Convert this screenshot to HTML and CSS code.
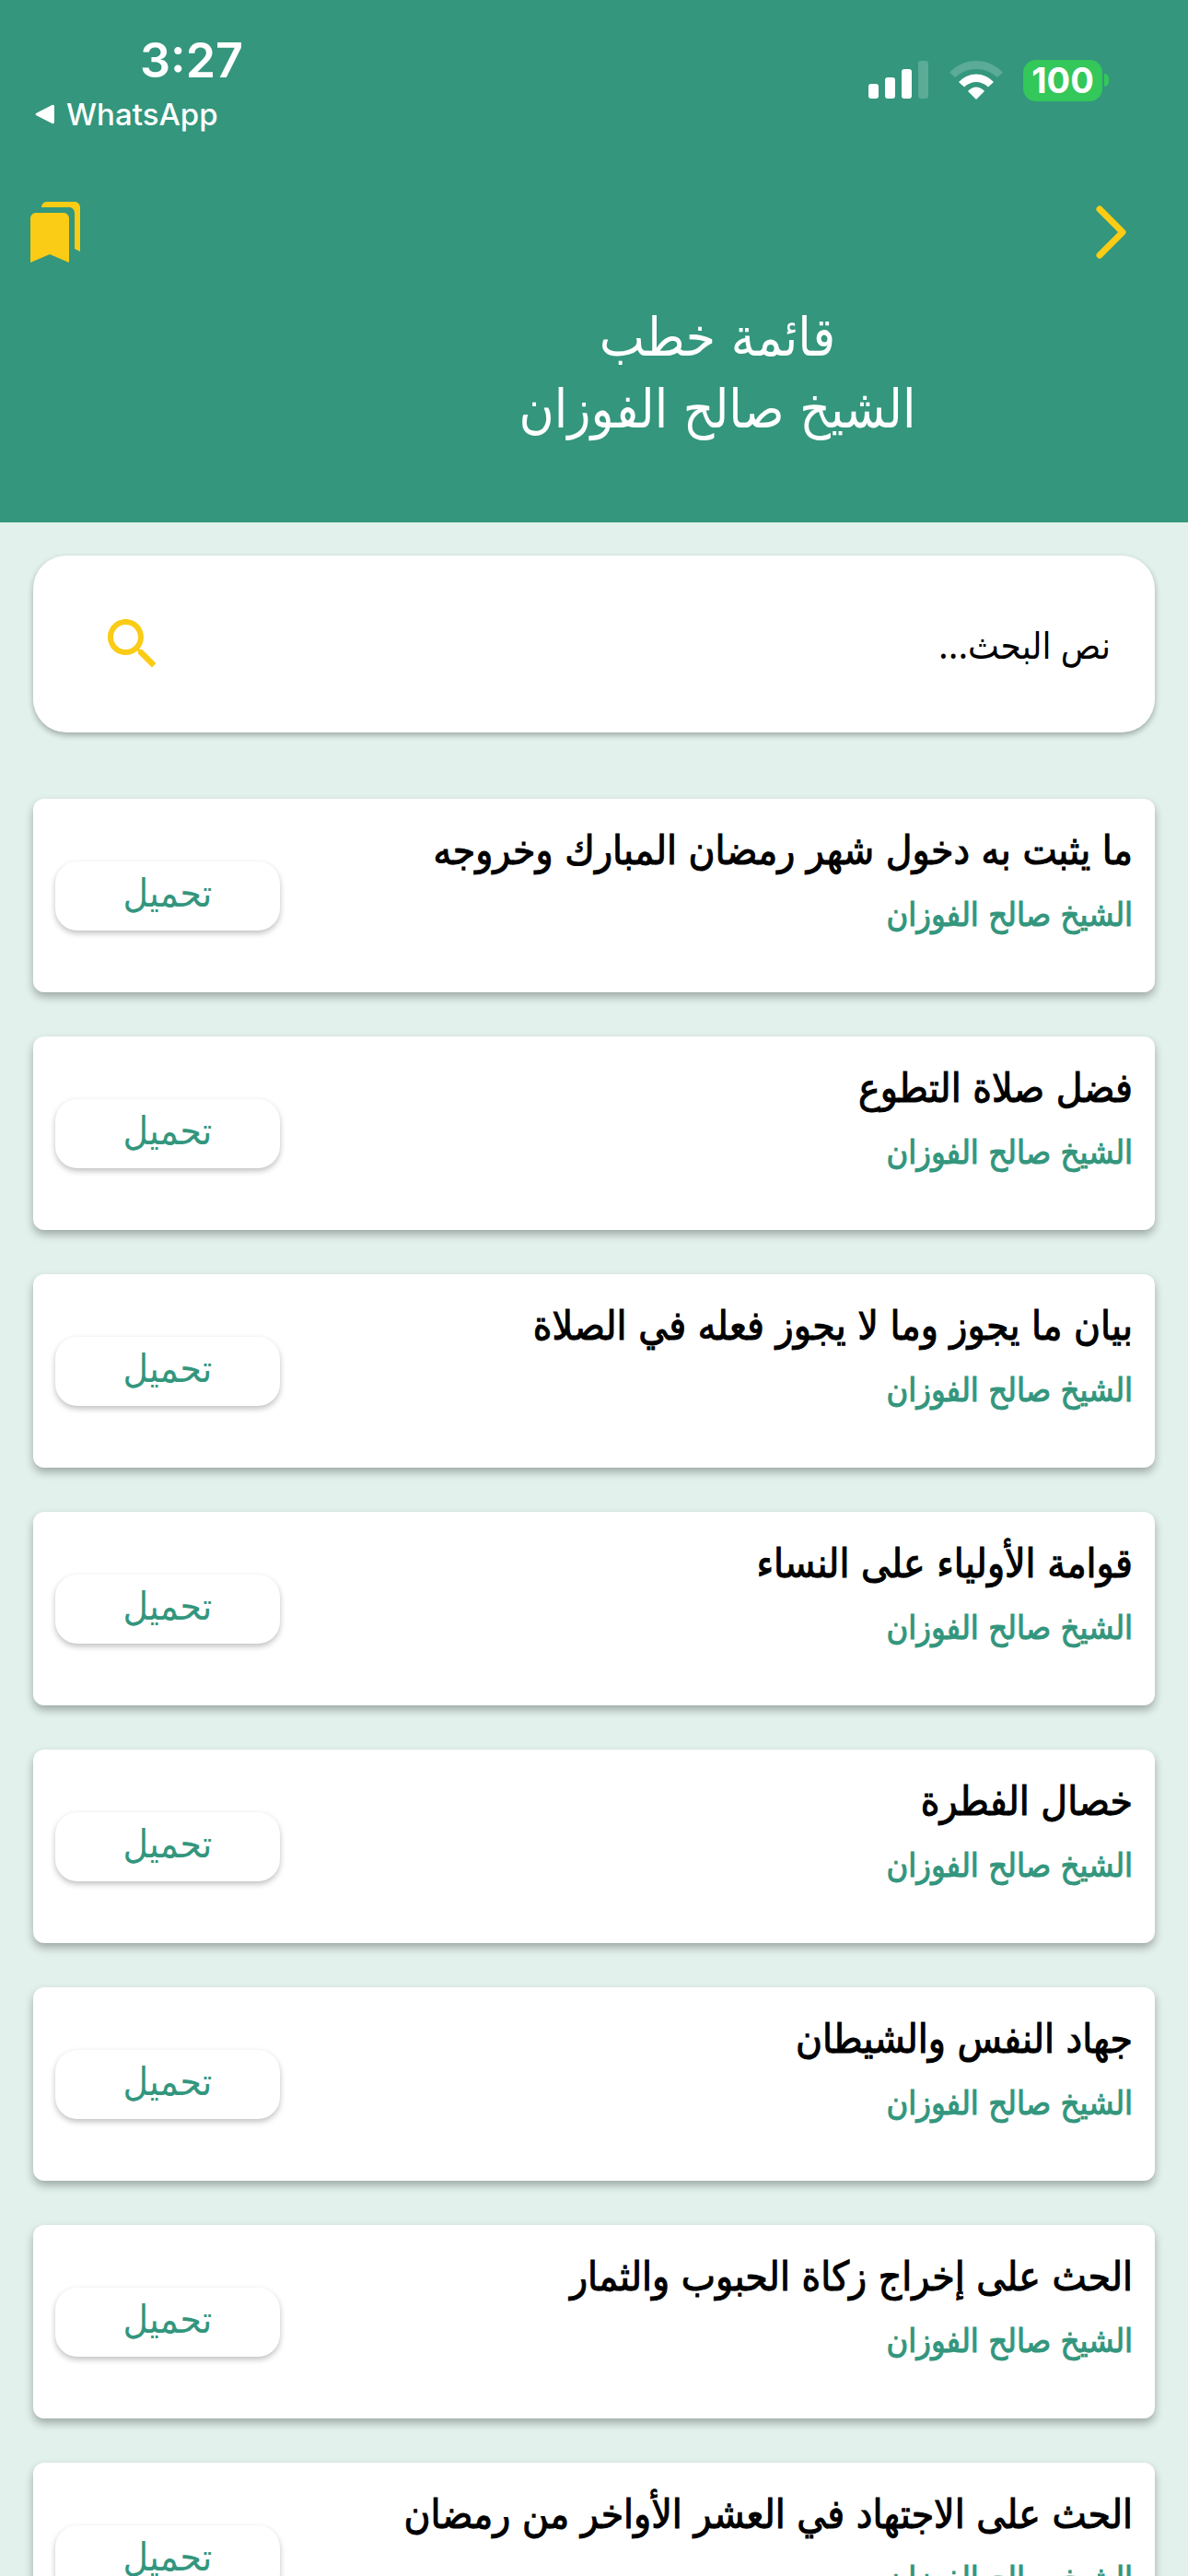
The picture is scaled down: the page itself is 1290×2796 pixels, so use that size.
FILE: index.html
```html
<!DOCTYPE html>
<html lang="ar" dir="rtl">
<head>
    <meta charset="UTF-8">
    <meta name="viewport" content="width=device-width, initial-scale=1.0">
    <title>قائمة خطب الشيخ صالح الفوزان</title>
    <link rel="stylesheet" href="styles.css">
</head>
<body>
<div class="app">

    <header class="header">
        <div class="status-bar" dir="ltr">
            <div class="status-left">
                <span class="time">3:27</span>
                <a class="back-app" href="#">
                    <svg width="22" height="22" viewBox="0 0 22 22"><path d="M2 9.500 18.500 1Q21 0 21 2.500V19.500Q21 22 18.500 21L2 12.500Q-1 11 2 9.500Z" fill="#fff"/></svg>
                    WhatsApp
                </a>
            </div>
            <div class="status-right">
                <svg width="66" height="42" viewBox="0 0 66 42" fill="#fff">
                    <rect x="0" y="25" width="11" height="16" rx="3"/>
                    <rect x="18" y="18" width="11" height="23" rx="3"/>
                    <rect x="36" y="9" width="11" height="32" rx="3"/>
                    <rect x="54" y="0" width="11" height="41" rx="3" opacity=".2"/>
                </svg>
                <svg width="58" height="42" viewBox="0 0 58 42" fill="#fff">
                    <path d="M0 12.500Q12 0 29 0T58 12.500L52 18Q42 9 29 9T6 18Z" opacity=".2"/>
                    <path d="M10 23Q18 14.500 29 14.500T48 23L42 28.500Q36 23 29 23T16 28.500Z"/>
                    <path d="M20 33Q24 28.500 29 28.500T38 33L29 42Z"/>
                </svg>
                <span class="battery">100</span>
            </div>
        </div>

        <nav class="nav">
            <button class="icon-btn" aria-label="رجوع">
                <svg width="72" height="72" viewBox="0 0 72 72"><path d="M24 11 49 36 24 61" fill="none" stroke="#facc15" stroke-width="7" stroke-linecap="round" stroke-linejoin="round"/></svg>
            </button>
            <button class="icon-btn" aria-label="المحفوظات">
                <svg width="72" height="72" viewBox="0 0 24 24" fill="#facc15"><path d="M19 18l2 1V3c0-1.100-.9-2-2-2H8.990C7.890 1 7 1.900 7 3h10c1.100 0 2 .9 2 2v13zM15 5H5c-1.100 0-2 .9-2 2v16l7-3 7 3V7c0-1.100-.9-2-2-2z"/></svg>
            </button>
        </nav>

        <h1 class="page-title">قائمة خطب<br>الشيخ صالح الفوزان</h1>
    </header>

    <main class="content">
        <form class="search">
            <input class="search-input" type="text" aria-label="نص البحث" placeholder="نص البحث...">
            <button class="icon-btn" type="button" aria-label="بحث">
                <svg width="72" height="72" viewBox="0 0 24 24" fill="#facc15"><path d="M15.500 14h-.79l-.28-.27C15.410 12.590 16 11.110 16 9.500 16 5.910 13.090 3 9.500 3S3 5.910 3 9.500 5.910 16 9.500 16c1.610 0 3.090-.59 4.230-1.570l.27.28v.79l5 4.990L20.490 19l-4.990-5zm-6 0C7.010 14 5 11.990 5 9.500S7.010 5 9.500 5 14 7.010 14 9.500 11.990 14 9.500 14z"/></svg>
            </button>
        </form>

        <ul class="list">
            <li class="card">
                <div class="card-text">
                    <h2 class="card-title">ما يثبت به دخول شهر رمضان المبارك وخروجه</h2>
                    <p class="card-author">الشيخ صالح الفوزان</p>
                </div>
                <button class="download-btn">تحميل</button>
            </li>
            <li class="card">
                <div class="card-text">
                    <h2 class="card-title">فضل صلاة التطوع</h2>
                    <p class="card-author">الشيخ صالح الفوزان</p>
                </div>
                <button class="download-btn">تحميل</button>
            </li>
            <li class="card">
                <div class="card-text">
                    <h2 class="card-title">بيان ما يجوز وما لا يجوز فعله في الصلاة</h2>
                    <p class="card-author">الشيخ صالح الفوزان</p>
                </div>
                <button class="download-btn">تحميل</button>
            </li>
            <li class="card">
                <div class="card-text">
                    <h2 class="card-title">قوامة الأولياء على النساء</h2>
                    <p class="card-author">الشيخ صالح الفوزان</p>
                </div>
                <button class="download-btn">تحميل</button>
            </li>
            <li class="card">
                <div class="card-text">
                    <h2 class="card-title">خصال الفطرة</h2>
                    <p class="card-author">الشيخ صالح الفوزان</p>
                </div>
                <button class="download-btn">تحميل</button>
            </li>
            <li class="card">
                <div class="card-text">
                    <h2 class="card-title">جهاد النفس والشيطان</h2>
                    <p class="card-author">الشيخ صالح الفوزان</p>
                </div>
                <button class="download-btn">تحميل</button>
            </li>
            <li class="card">
                <div class="card-text">
                    <h2 class="card-title">الحث على إخراج زكاة الحبوب والثمار</h2>
                    <p class="card-author">الشيخ صالح الفوزان</p>
                </div>
                <button class="download-btn">تحميل</button>
            </li>
            <li class="card">
                <div class="card-text">
                    <h2 class="card-title">الحث على الاجتهاد في العشر الأواخر من رمضان</h2>
                    <p class="card-author">الشيخ صالح الفوزان</p>
                </div>
                <button class="download-btn">تحميل</button>
            </li>
        </ul>
    </main>

</div>
</body>
</html>
```

FILE: styles.css
```css
* {
    box-sizing: border-box;
}
body {
    margin: 0;
    background-color: #e2f1ec;
    font-family: "DejaVu Sans Condensed", "DejaVu Sans", sans-serif;
    color: #000;
}
button, input {
    font-family: inherit;
    border: none;
    background: none;
    padding: 0;
}
.app {
    height: 100vh;
    overflow: hidden;
}

/* header */
.header {
    background-color: #33967d;
    color: #fff;
    padding-bottom: 84px;
}
.status-bar {
    display: flex;
    justify-content: space-between;
    height: 216px;
    padding: 34px 93px 0 38px;
    font-family: Inter, sans-serif;
}
.status-left {
    display: flex;
    flex-direction: column;
}
.time {
    font-size: 52px;
    font-weight: 600;
    line-height: 64px;
    padding-left: 114px;
}
.back-app {
    display: flex;
    align-items: center;
    gap: 12px;
    font-size: 33px;
    font-weight: 500;
    line-height: 52px;
    color: #fff;
    text-decoration: none;
}
.status-right {
    display: flex;
    align-items: center;
    gap: 22px;
    height: 46px;
    margin-top: 30px;
}
.battery {
    position: relative;
    width: 86px;
    height: 45px;
    border-radius: 14px;
    background-color: #34c759;
    font-size: 38px;
    font-weight: 700;
    line-height: 45px;
    text-align: center;
}
.battery::after {
    content: "";
    position: absolute;
    left: 88px;
    top: 15px;
    width: 5px;
    height: 14px;
    border-radius: 0 5px 5px 0;
    background-color: #34c759;
}
.nav {
    display: flex;
    justify-content: space-between;
    padding: 0 48px 0 24px;
}
.icon-btn {
    height: 72px;
    cursor: pointer;
}
.icon-btn svg {
    display: block;
}
.page-title {
    margin: 0;
    padding: 39px 0 0 268px;
    font-size: 58px;
    font-weight: 400;
    line-height: 78px;
    text-align: center;
}

/* search box */
.content {
    padding: 36px;
}
.search {
    display: flex;
    align-items: center;
    height: 192px;
    padding: 0 48px 0 72px;
    background-color: #fff;
    border-radius: 36px;
    box-shadow: 0 3px 6px rgba(0, 0, 0, 0.3);
}
.search-input {
    flex: 1;
    min-width: 0;
    height: 96px;
    font-family: "Noto Sans", "DejaVu Sans Condensed", "DejaVu Sans", sans-serif;
    font-size: 40px;
    outline: none;
}
.search-input::placeholder {
    color: #000;
    opacity: 1;
    overflow: visible;
}

/* list */
.list {
    display: flex;
    flex-direction: column;
    gap: 48px;
    margin: 72px 0 0;
    padding: 0;
    list-style: none;
}
.card {
    display: flex;
    justify-content: space-between;
    height: 210px;
    padding: 24px;
    background-color: #fff;
    border-radius: 12px;
    box-shadow: 0 5px 10px rgba(0, 0, 0, 0.3);
}
.card-title {
    margin: 0;
    font-size: 44px;
    font-weight: 400;
    line-height: 64px;
    -webkit-text-stroke: 1px #000;
}
.card-author {
    margin: 0;
    font-size: 36px;
    font-weight: 400;
    line-height: 76px;
    color: #33967d;
    -webkit-text-stroke: 1px #33967d;
}
.download-btn {
    align-self: center;
    width: 244px;
    height: 75px;
    border-radius: 24px;
    padding-bottom: 6px;
    background-color: #fff;
    box-shadow: 0 3px 6px rgba(0, 0, 0, 0.25);
    color: #33967d;
    font-size: 42px;
    cursor: pointer;
}
```
